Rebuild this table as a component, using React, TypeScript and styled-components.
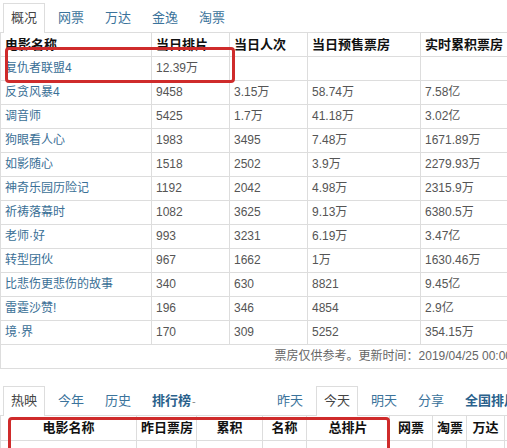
import React from "react";
import styled, { createGlobalStyle } from "styled-components";

const Global = createGlobalStyle`
  html, body { margin: 0; padding: 0; background: #fff; overflow: hidden; }
  body { font-family: "Liberation Sans", "Noto Sans CJK SC", sans-serif; font-size: 12px; color: #555; }
`;

const Page = styled.div`
  width: 530px;
`;

const Section = styled.div`
  position: relative;
`;

const TabBar = styled.div<{ $top: number }>`
  display: flex;
  align-items: flex-end;
  padding: ${(p) => p.$top}px 0 0 3px;
  border-bottom: 1px solid #ddd;
  height: 29px;
`;

const TabGroup = styled.div<{ $right?: boolean }>`
  display: flex;
  margin-left: ${(p) => (p.$right ? "auto" : "0")};
`;

const Tab = styled.div<{ $active?: boolean; $strong?: boolean }>`
  line-height: 28px;
  padding: 0 7px;
  margin-right: 5px;
  font-size: 13px;
  box-sizing: border-box;
  border: 1px solid ${(p) => (p.$active ? "#ddd" : "transparent")};
  border-bottom: none;
  background: #fff;
  margin-bottom: ${(p) => (p.$active ? "-1px" : "0")};
  height: ${(p) => (p.$active ? "30px" : "29px")};
  color: ${(p) => (p.$active ? "#444" : p.$strong ? "#2a618c" : "#3b739b")};
  font-weight: ${(p) => (p.$strong ? "bold" : "normal")};
  white-space: nowrap;
`;

const Caret = styled.span`
  color: #888;
  font-weight: normal;
  font-size: 11px;
  margin-left: 1px;
`;

const Row = styled.div<{ $cols: string }>`
  display: grid;
  grid-template-columns: ${(p) => p.$cols};
  border-left: 1px solid #ddd;
`;

const Cell = styled.div<{ $head?: boolean; $name?: boolean; $center?: boolean; $h?: number }>`
  height: ${(p) => p.$h ?? 24}px;
  line-height: ${(p) => (p.$h ?? 24) - 1}px;
  box-sizing: border-box;
  border-right: 1px solid #ddd;
  border-bottom: 1px solid #ddd;
  padding: 0 4px;
  white-space: nowrap;
  overflow: hidden;
  font-size: ${(p) => (p.$head ? "13px" : "12px")};
  font-weight: ${(p) => (p.$head ? "bold" : "normal")};
  text-align: ${(p) => (p.$center ? "center" : "left")};
  color: ${(p) => (p.$head ? "#111" : p.$name ? "#3a6f96" : "#555")};
`;

const Footer = styled.div`
  height: 24px;
  line-height: 23px;
  box-sizing: border-box;
  border-left: 1px solid #ddd;
  border-bottom: 1px solid #ddd;
  text-align: right;
  padding-right: 18px;
  color: #666;
  white-space: nowrap;
`;

const Highlight = styled.div<{ $l: number; $t: number; $w: number; $h: number }>`
  position: absolute;
  left: ${(p) => p.$l}px;
  top: ${(p) => p.$t}px;
  width: ${(p) => p.$w}px;
  height: ${(p) => p.$h}px;
  border: 3px solid #cf2b2b;
  border-radius: 4px;
  box-sizing: border-box;
  pointer-events: none;
`;

const Spacer = styled.div`
  height: 17px;
`;

const topCols = "151px 78px 78px 113px 109px";
const bottomCols = "136px 60px 66px 44px 83px 43px 34px 38px 1fr";

const rows: string[][] = [
  ["复仇者联盟4", "12.39万", "", "", ""],
  ["反贪风暴4", "9458", "3.15万", "58.74万", "7.58亿"],
  ["调音师", "5425", "1.7万", "41.18万", "3.02亿"],
  ["狗眼看人心", "1983", "3495", "7.48万", "1671.89万"],
  ["如影随心", "1518", "2502", "3.9万", "2279.93万"],
  ["神奇乐园历险记", "1192", "2042", "4.98万", "2315.9万"],
  ["祈祷落幕时", "1082", "3625", "9.13万", "6380.5万"],
  ["老师·好", "993", "3231", "6.19万", "3.47亿"],
  ["转型团伙", "967", "1662", "1万", "1630.46万"],
  ["比悲伤更悲伤的故事", "340", "630", "8821", "9.45亿"],
  ["雷霆沙赞!", "196", "346", "4854", "2.9亿"],
  ["境·界", "170", "309", "5252", "354.15万"],
];

const topHead = ["电影名称", "当日排片", "当日人次", "当日预售票房", "实时累积票房"];
const bottomHead = ["电影名称", "昨日票房", "累积", "名称", "总排片", "网票", "淘票", "万达", ""];

export default function App() {
  return (
    <Page>
      <Global />
      <Section>
        <TabBar $top={3}>
          <TabGroup>
            <Tab $active>概况</Tab>
            <Tab>网票</Tab>
            <Tab>万达</Tab>
            <Tab>金逸</Tab>
            <Tab>淘票</Tab>
          </TabGroup>
        </TabBar>
        <Row $cols={topCols}>
          {topHead.map((h) => (
            <Cell key={h} $head>
              {h}
            </Cell>
          ))}
        </Row>
        {rows.map((r) => (
          <Row key={r[0]} $cols={topCols}>
            {r.map((c, i) => (
              <Cell key={i} $name={i === 0}>
                {c}
              </Cell>
            ))}
          </Row>
        ))}
        <Footer>票房仅供参考。更新时间：2019/04/25 00:00</Footer>
        <Highlight $l={5} $t={47} $w={230} $h={36} />
      </Section>
      <Spacer />
      <Section>
        <TabBar $top={0}>
          <TabGroup>
            <Tab $active>热映</Tab>
            <Tab>今年</Tab>
            <Tab>历史</Tab>
            <Tab $strong>
              排行榜<Caret>-</Caret>
            </Tab>
          </TabGroup>
          <TabGroup $right>
            <Tab>昨天</Tab>
            <Tab $active>今天</Tab>
            <Tab>明天</Tab>
            <Tab>分享</Tab>
            <Tab $strong>全国排片</Tab>
          </TabGroup>
        </TabBar>
        <Row $cols={bottomCols}>
          {bottomHead.map((h, i) => (
            <Cell key={i} $head $center $h={25}>
              {h}
            </Cell>
          ))}
        </Row>
        <Row $cols={bottomCols}>
          {bottomHead.map((_, i) => (
            <Cell key={i} $h={25} />
          ))}
        </Row>
        <Highlight $l={8} $t={31} $w={382} $h={60} />
      </Section>
    </Page>
  );
}
